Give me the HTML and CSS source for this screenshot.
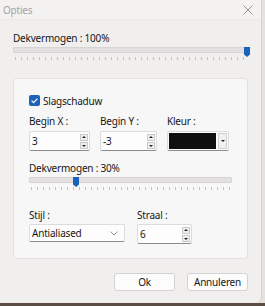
FILE: index.html
```html
<!DOCTYPE html>
<html lang="nl">
<head>
  <meta charset="UTF-8" />
  <title>Opties</title>
  <link rel="stylesheet" href="styles.css">
</head>
<body>

  <div class="window">

    <!-- Titelbalk -->
    <div class="titlebar">
      <span class="title">Opties</span>
      <svg class="close" width="10" height="10" viewBox="0 0 10 10">
        <path d="M0.5 0.5 L9.5 9.5 M9.5 0.5 L0.5 9.5" stroke="#8a8a8a" stroke-width="0.9" fill="none"/>
      </svg>
    </div>

    <div class="content">

      <div class="label">Dekvermogen : 100%</div>
      <div class="slider">
        <div class="track"></div>
        <div class="thumb" style="left: 231px"></div>
        <div class="ticks"></div>
      </div>

      <!-- Slagschaduw -->
      <div class="group">
        <label class="check">
          <span class="box">
            <svg width="11" height="11" viewBox="0 0 11 11">
              <path d="M2.6 5.6 L4.6 7.6 L8.4 3.6" stroke="#fff" stroke-width="1.2" fill="none"/>
            </svg>
          </span>
          Slagschaduw
        </label>

        <div class="row3">
          <div class="field">
            <div class="label">Begin X :</div>
            <div class="spin">
              <span class="value">3</span>
              <span class="arrows"><span class="up"></span><span class="down"></span></span>
            </div>
          </div>
          <div class="field">
            <div class="label">Begin Y :</div>
            <div class="spin">
              <span class="value">-3</span>
              <span class="arrows"><span class="up"></span><span class="down"></span></span>
            </div>
          </div>
          <div class="field">
            <div class="label">Kleur :</div>
            <div class="color">
              <span class="swatch"></span>
              <span class="drop"></span>
            </div>
          </div>
        </div>

        <div class="label label-gap">Dekvermogen : 30%</div>
        <div class="slider">
          <div class="track"></div>
          <div class="thumb" style="left: 44px"></div>
          <div class="ticks"></div>
        </div>

        <div class="row2">
          <div class="field">
            <div class="label">Stijl :</div>
            <div class="combo">
              <span class="value">Antialiased</span>
              <svg width="8" height="5" viewBox="0 0 8 5">
                <path d="M0.5 0.5 L4 4 L7.5 0.5" stroke="#8a8a8a" stroke-width="0.9" fill="none"/>
              </svg>
            </div>
          </div>
          <div class="field">
            <div class="label">Straal :</div>
            <div class="spin">
              <span class="value">6</span>
              <span class="arrows"><span class="up"></span><span class="down"></span></span>
            </div>
          </div>
        </div>
      </div>

      <div class="buttons">
        <button class="btn">Ok</button>
        <button class="btn">Annuleren</button>
      </div>

    </div>
  </div>

</body>
</html>
```

FILE: styles.css
```css
html, body {
  margin: 0;
  height: 306px;
  overflow: hidden;
}

body {
  font-family: "Noto Sans", "Open Sans", sans-serif;
  font-size: 10px;
  letter-spacing: -0.2px;
  color: #161616;
  background: linear-gradient(to bottom, #e4e1df 0, #e4e1df 303px, #5b4c44 303px);
}

.window {
  width: 262px;
  height: 303px;
  background: #f1efee;
  border-right: 1px solid #d6d3d1;
  border-radius: 0 0 6px 0;
  box-sizing: border-box;
  display: flex;
  flex-direction: column;
}

.titlebar {
  height: 20px;
  display: flex;
  align-items: center;
  justify-content: space-between;
  padding: 0 8px 0 3px;
  background: #f4f2f1;
  border-bottom: 1px solid #ebe9e8;
  box-sizing: border-box;
}

.title {
  color: #a3a3a3;
  font-size: 10px;
  line-height: 12px;
}

.close {
  display: block;
}

.content {
  padding: 12px 13px 0 13px;
}

.label {
  line-height: 12px;
  white-space: nowrap;
}

/* schuifregelaar */
.slider {
  position: relative;
  height: 16px;
  margin-top: 2px;
}

.track {
  height: 4px;
  margin-top: 3px;
  background: #e2e0e0;
  border: 1px solid #d6d4d4;
  border-radius: 1px;
}

.thumb {
  position: absolute;
  top: 0;
  width: 6px;
  height: 10px;
  background: #1a63bd;
  clip-path: polygon(0 0, 100% 0, 100% 75%, 50% 100%, 0 75%);
}

.ticks {
  height: 3px;
  margin-top: 4px;
  margin-left: 2px;
  background: repeating-linear-gradient(to right, #c2c0c0 0, #c2c0c0 1px, transparent 1px, transparent 6px);
}

.group {
  margin-top: 15px;
  width: 235px;
  height: 181px;
  box-sizing: border-box;
  background: #f8f7f7;
  border: 1px solid #e3e1e1;
  border-radius: 3px;
  padding: 15px 15px 0 15px;
}

.check {
  display: flex;
  align-items: center;
  gap: 3px;
  height: 13px;
  line-height: 12px;
}

.box {
  width: 11px;
  height: 11px;
  background: #1c64b8;
  border-radius: 2px;
  display: block;
}

.box svg {
  display: block;
}

.row3 {
  display: grid;
  grid-template-columns: 61px 57px 62px;
  column-gap: 10px;
  margin-top: 8px;
}

.row2 {
  display: grid;
  grid-template-columns: 96px 55px;
  column-gap: 12px;
  margin-top: 16px;
}

.field .label {
  margin-bottom: 4px;
}

.row2 .field .label {
  margin-bottom: 3px;
}

.label-gap {
  margin-top: 11px;
}

.spin, .combo, .color {
  height: 20px;
  box-sizing: border-box;
  background: #fdfdfd;
  border: 1px solid #dcdcdc;
  border-bottom-color: #8c8c8c;
  border-radius: 2px;
  display: flex;
  align-items: center;
}

.combo {
  height: 18px;
  justify-content: space-between;
  padding-right: 6px;
}

.value {
  flex: 1;
  padding-left: 2px;
  line-height: 12px;
}

.arrows {
  display: flex;
  flex-direction: column;
  gap: 1px;
  margin-right: 1px;
}

.up, .down {
  width: 8px;
  height: 7px;
  box-sizing: border-box;
  background: #efefef;
  border: 1px solid #c9c9c9;
  position: relative;
}

.up::after, .down::after {
  content: "";
  position: absolute;
  left: 1px;
  border-left: 2px solid transparent;
  border-right: 2px solid transparent;
}

.up::after {
  top: 1px;
  border-bottom: 2px solid #222;
}

.down::after {
  top: 2px;
  border-top: 2px solid #222;
}

.color {
  padding: 1px;
  gap: 2px;
}

.swatch {
  width: 48px;
  height: 16px;
  background: #101010;
}

.drop {
  width: 9px;
  height: 16px;
  box-sizing: border-box;
  background: #f0f0f0;
  border: 1px solid #cfcfcf;
  position: relative;
}

.drop::after {
  content: "";
  position: absolute;
  left: 2px;
  top: 6px;
  border-left: 2px solid transparent;
  border-right: 2px solid transparent;
  border-top: 2px solid #222;
}

.buttons {
  display: flex;
  justify-content: flex-end;
  gap: 12px;
  margin-top: 14px;
}

.btn {
  width: 61px;
  height: 18px;
  box-sizing: border-box;
  font-family: inherit;
  font-size: 10px;
  letter-spacing: inherit;
  line-height: 12px;
  color: #161616;
  background: #fcfcfc;
  border: 1px solid #d3d1d1;
  border-radius: 3px;
  padding: 0;
}
```
